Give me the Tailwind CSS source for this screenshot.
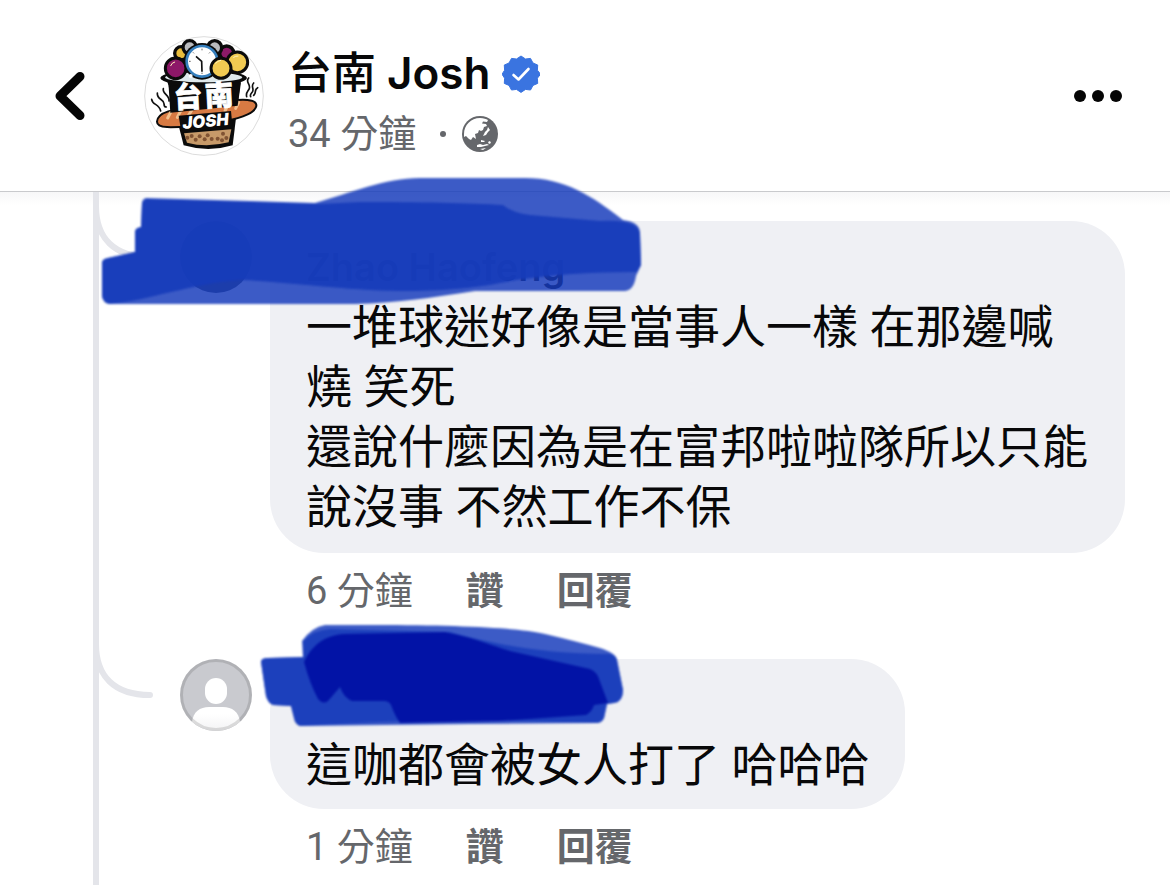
<!DOCTYPE html>
<html lang="zh-Hant">
<head>
    <meta charset="UTF-8">
    <meta name="viewport" content="width=device-width, initial-scale=1.0">
    <title>台南 Josh</title>
    <script src="https://cdn.jsdelivr.net/npm/@tailwindcss/browser@4"></script>
</head>
<body class="min-h-screen flex flex-col overflow-x-hidden bg-white text-[#080809] font-['Inter','Noto_Sans_CJK_TC',sans-serif]">
    <!-- Post header -->
    <header class="h-48 shrink-0 flex items-center pl-[54px] pr-12 border-b border-[#c9cacd]">
        <button type="button" aria-label="返回" class="w-8 shrink-0">
            <svg class="w-8 h-12" viewBox="0 0 32 48" fill="none" stroke="#050505" stroke-width="9" stroke-linecap="round" stroke-linejoin="round"><path d="M26 4.500L6 24l20 19.500"/></svg>
        </button>

        <svg class="size-[120px] shrink-0 ml-[58px]" viewBox="41 33 360 360" role="img" aria-label="台南 Josh">
            <circle cx="221" cy="213" r="178" fill="#fff" stroke="#dcdcdc" stroke-width="3"/>
            <!-- steam -->
            <g fill="none" stroke="#111" stroke-width="5" stroke-linecap="round">
                <path d="M64 223c2 18 22 12 27 35M81 204c-2 20 20 18 20 32 0 8 4 10 7 10M99 191c-4 16 20 20 17 37"/>
                <path d="M355 159c-12 12 9 20 1 34-6 9-10 10-7 22M370 174c-10 10 3 18-4 27-5 6-8 8-5 14M382 188c-12 6-2 14-12 23"/>
            </g>
            <!-- balls behind the rim -->
            <g stroke="#0b0b0b" stroke-width="10">
                <circle cx="153" cy="85" r="20" fill="#e9bd3c"/>
                <circle cx="289" cy="84" r="21" fill="#8d1a68"/>
                <circle cx="178" cy="67" r="20" fill="#b9babd"/>
                <circle cx="253" cy="68" r="21" fill="#b9babd"/>
            </g>
            <!-- cup -->
            <ellipse cx="220" cy="159" rx="130" ry="24" fill="#0b0b0b"/>
            <path d="M110 165h221l-24 196q-73 22-147 0z" fill="#0b0b0b"/>
            <ellipse cx="220" cy="157" rx="116" ry="15" fill="#dfe9ec"/>
            <g stroke="#0b0b0b" stroke-width="9">
                <circle cx="321" cy="112" r="31" fill="#f1ca52"/>
                <circle cx="136" cy="130" r="31" fill="#8d1768"/>
            </g>
            <circle cx="215" cy="109" r="55" fill="#0b0b0b"/>
            <circle cx="215" cy="109" r="46" fill="#fff" stroke="#367fbd" stroke-width="8"/>
            <path d="M197 94l17 15 1 31" fill="none" stroke="#111" stroke-width="5"/>
            <path d="M215 71v5M215 143v4M176 109h5M249 109h5M188 82l3 3M239 82l-3 3" stroke="#666" stroke-width="3"/>
            <circle cx="272" cy="130" r="30" fill="#f1ca52" stroke="#0b0b0b" stroke-width="9"/>
            <circle cx="181" cy="153" r="6" fill="#fff"/>
            <path d="M256 115q6-8 15-9M310 97q6-5 13-4M121 122q4-10 12-11" fill="none" stroke="#fff3bd" stroke-width="3" stroke-linecap="round"/>
            <!-- bread -->
            <path d="M80 290c2-35 65-38 130-46 65-7 112-28 154-17 25 8 14 29-12 41-40 18-107 29-168 35-58 5-104 8-104-13z" fill="#d77a43" stroke="#0b0b0b" stroke-width="6"/>
            <path d="M121 262l-9 17M151 258l-10 19M184 256l-9 14M292 242l-8 16M325 232l-9 18" stroke="#f3c08d" stroke-width="9" stroke-linecap="round"/>
            <path d="M115 184l217-12-10 70-114 12-88 9z" fill="#0b0b0b"/>
            <path d="M145 272l157-14 5 52-154 12z" fill="#0b0b0b"/>
            <path d="M161 325l142-12-8 39q-66 17-125 1z" fill="#c79a69"/>
            <g fill="#805333"><circle cx="171" cy="338" r="6"/><circle cx="184" cy="333" r="6"/><circle cx="196" cy="344" r="6"/><circle cx="208" cy="334" r="6"/><circle cx="223" cy="343" r="6"/><circle cx="232" cy="331" r="6"/><circle cx="244" cy="342" r="6"/><circle cx="262" cy="341" r="6"/><circle cx="278" cy="326" r="6"/><circle cx="288" cy="339" r="6"/><circle cx="275" cy="346" r="6"/></g>
            <g fill="#fff" font-weight="900">
                <g font-size="86" stroke="#fff" stroke-width="2" font-family="Noto Sans CJK TC, sans-serif">
                    <text x="130" y="247" transform="rotate(-3 170 215)">台</text>
                    <text x="223" y="242" transform="rotate(-3 268 210)">南</text>
                </g>
                <text x="226" y="306" font-size="50" text-anchor="middle" font-style="italic" font-family="Inter, sans-serif" transform="rotate(-5 226 290)">JOSH</text>
            </g>
        </svg>

        <div class="ml-6 pt-4 min-w-0 flex-1">
            <div class="flex items-center gap-3">
                <h1 class="text-[44px] leading-[60px] font-semibold whitespace-nowrap"><span class="font-medium font-['Roboto','Noto_Sans_CJK_TC',sans-serif]">台南 </span>Josh</h1>
                <svg class="size-[38px]" viewBox="0 0 38 38" role="img" aria-label="已驗證">
                    <path fill="#3a74e0" stroke="#3a74e0" stroke-linejoin="round" d="M19 1l4.500 3 5-.6 2.500 4.600 4.700 2-.3 5.200 3.100 4-3.100 4 .3 5.200-4.700 2-2.500 4.600-5-.6-4.500 3-4.500-3-5 .6L7 30.400l-4.700-2 .3-5.200-2.600-4 2.600-4-.3-5.200L7 8l2.500-4.600 5 .6z"/>
                    <path d="M11.500 20l5 4.500 10-10.500" fill="none" stroke="#fff" stroke-width="2.600" stroke-linecap="round" stroke-linejoin="round"/>
                </svg>
            </div>
            <div class="flex items-center text-[38px] leading-[60px] text-[#65676b] font-['Roboto','Noto_Sans_CJK_TC',sans-serif]">
                <span class="whitespace-nowrap">34 分鐘</span>
                <span class="size-1.5 rounded-full bg-[#65676b] ml-6 mr-4"></span>
                <svg class="size-9" viewBox="0 0 36 36" role="img" aria-label="公開">
                    <circle cx="18" cy="18" r="18" fill="#65676b"/>
                    <g fill="#fff">
                        <path d="M2 18C2 9 9 2 18 2c4 0 6 1 8 2l-1 2-4-.5-1 2 4 .5 1 2-3 1-1 3-2 1-2-1-1 3-3 1 1 5-3-2-2 3-2-1-3-3-2 1z"/>
                        <path d="M26 11l2 3-2 2-2 3-3 1 2-4 2-2z"/>
                        <path d="M15 29l3-1 3 1 4-1 2 1-4 1-4 1-4 0zM18 33l6-1-3 2zM27 25l2 1-1 2-2-1z"/>
                        <path d="M19 24l4 1-1 1-3 0z"/>
                    </g>
                </svg>
            </div>
        </div>

        <button type="button" aria-label="更多" class="shrink-0">
            <svg class="w-12 h-3" viewBox="0 0 48 12" fill="#050505"><circle cx="6" cy="6" r="6"/><circle cx="24" cy="6" r="6"/><circle cx="42" cy="6" r="6"/></svg>
        </button>
    </header>

    <!-- Comment thread -->
    <main class="flex-1 flex flex-col bg-linear-to-b from-[#f7f7f8] to-white to-[13px]">
        <ul class="flex-1 ml-[93px] border-l-6 border-[#e4e5ea]">
            <li class="relative flex items-start pr-[45px]">
                <svg class="w-[54px] h-[68px] shrink-0" viewBox="0 0 54 68" fill="none" stroke="#e4e5ea" stroke-width="6" stroke-linecap="round"><path d="M-3 14C-3 46 15 65 51 65"/></svg>
                <div class="mt-[29px] ml-[27px] size-[72px] shrink-0 rounded-full bg-[#3c4658]"></div>
                <article class="mt-[29px] ml-[18px] min-w-0">
                    <div class="rounded-[54px] bg-[#eff0f4] px-9 pt-4 pb-4">
                        <h2 class="text-[38px] leading-[60px] font-semibold">Zhao Haofeng</h2>
                        <p class="text-[46px] leading-[60px] font-['Roboto','Noto_Sans_CJK_TC',sans-serif]">一堆球迷好像是當事人一樣 在那邊喊燒 笑死<br>還說什麼因為是在富邦啦啦隊所以只能說沒事 不然工作不保</p>
                    </div>
                    <div class="h-[77px] flex items-center gap-[53px] pl-9 text-[38px] text-[#65676b] font-['Roboto','Noto_Sans_CJK_TC',sans-serif]">
                        <time>6 分鐘</time>
                        <button type="button" class="font-bold">讚</button>
                        <button type="button" class="font-bold">回覆</button>
                    </div>
                </article>
                <!-- marker strokes over the name -->
                <svg class="absolute left-0 -top-5 w-[560px] h-[140px] blur-[1px]" viewBox="99 172 560 140" fill="#173cbb" aria-hidden="true">
                    <path opacity=".84" d="M146 198L315 203C350 193 385 178 420 178H525C565 178 592 196 623 220Q640 222 640 233L641 265L636 276Q634 290 625 291H475C430 298 395 303 355 304H110Q103 303 102 296V263Q102 259 108 258L135 252V232Q135 228 141 227L142 203Q142 199 146 198Z"/>
                    <path opacity=".92" d="M146 199L320 204L360 202C420 202 470 203 503 205Q512 213 530 215L600 221Q640 219 640 235L641 265L637 272C590 272 540 275 500 283Q460 291 400 291C340 290 280 281 240 280C190 284 150 300 110 304Q103 303 102 296V263Q102 259 108 258L135 252V232Q135 228 141 227L142 203Z"/>
                </svg>
            </li>

            <li class="relative flex items-start pr-[45px]">
                <svg class="w-[54px] h-[68px] shrink-0" viewBox="0 0 54 68" fill="none" stroke="#e4e5ea" stroke-width="6" stroke-linecap="round"><path d="M-3 14C-3 46 15 65 51 65"/></svg>
                <svg class="mt-[29px] ml-[27px] size-[72px] shrink-0" viewBox="0 0 72 72" role="img" aria-label="使用者">
                    <clipPath id="round"><circle cx="36" cy="36" r="36"/></clipPath>
                    <linearGradient id="fade" x1="0" y1="0" x2="0" y2="1"><stop offset=".3" stop-color="#fff"/><stop offset="1" stop-color="#f3f3f4"/></linearGradient>
                    <g clip-path="url(#round)">
                        <path fill="#c9cacf" d="M0 0h72v72H0z"/>
                        <rect x="25" y="19" width="22" height="26" rx="11" fill="#fff"/>
                        <path d="M12 63C13 53 20 48 29 48H43C52 48 59 53 60 63V72H12Z" fill="url(#fade)"/>
                    </g>
                    <circle cx="36" cy="36" r="34.500" fill="none" stroke="#000" stroke-opacity=".12" stroke-width="3"/>
                </svg>
                <article class="mt-[29px] ml-[18px] min-w-0">
                    <div class="rounded-[54px] bg-[#eff0f4] px-9 pt-4 pb-3.5">
                        <div class="h-[60px]"></div>
                        <p class="text-[46px] leading-[60px] font-['Roboto','Noto_Sans_CJK_TC',sans-serif]">這咖都會被女人打了 哈哈哈</p>
                    </div>
                    <div class="h-[76px] flex items-center gap-[53px] pl-9 text-[38px] text-[#65676b] font-['Roboto','Noto_Sans_CJK_TC',sans-serif]">
                        <time>1 分鐘</time>
                        <button type="button" class="font-bold">讚</button>
                        <button type="button" class="font-bold">回覆</button>
                    </div>
                </article>
                <svg class="absolute left-0 -top-5 w-[560px] h-[140px] blur-[1px]" viewBox="99 610 560 140" fill="#173cbb" aria-hidden="true">
                    <path opacity=".84" d="M325 625H375C460 625 520 628 545 634Q575 641 600 648Q616 653 617 660L623 690Q623 702 614 703L607 704L604 718Q602 723 596 723L470 724L300 726Q295 724 294 718L291 706L273 705Q268 703 266 696L261 662Q261 658 268 658L303 657L302 641Q312 627 325 625Z"/>
                    <path opacity=".84" d="M303 641Q314 630 330 629L450 632C490 643 540 654 610 654Q616 655 617 660L623 690Q623 702 614 703L607 704L604 718Q602 723 596 723L470 720L380 722L300 726Q295 724 294 718L291 706L273 705Q268 703 266 696L261 662Q261 658 268 658L303 657Z"/>
                    <path opacity=".96" fill="#0212a5" d="M304 662C312 645 325 635 345 634L445 632C475 638 490 645 510 651L590 669Q597 672 599 679L608 703L594 705Q592 712 586 715L500 721L400 723Q395 716 391 705Q389 701 384 701L352 701Q344 698 340 687L328 701Q323 705 318 699Q310 684 304 662Z"/>
                </svg>
            </li>
        </ul>
    </main>
</body>
</html>
